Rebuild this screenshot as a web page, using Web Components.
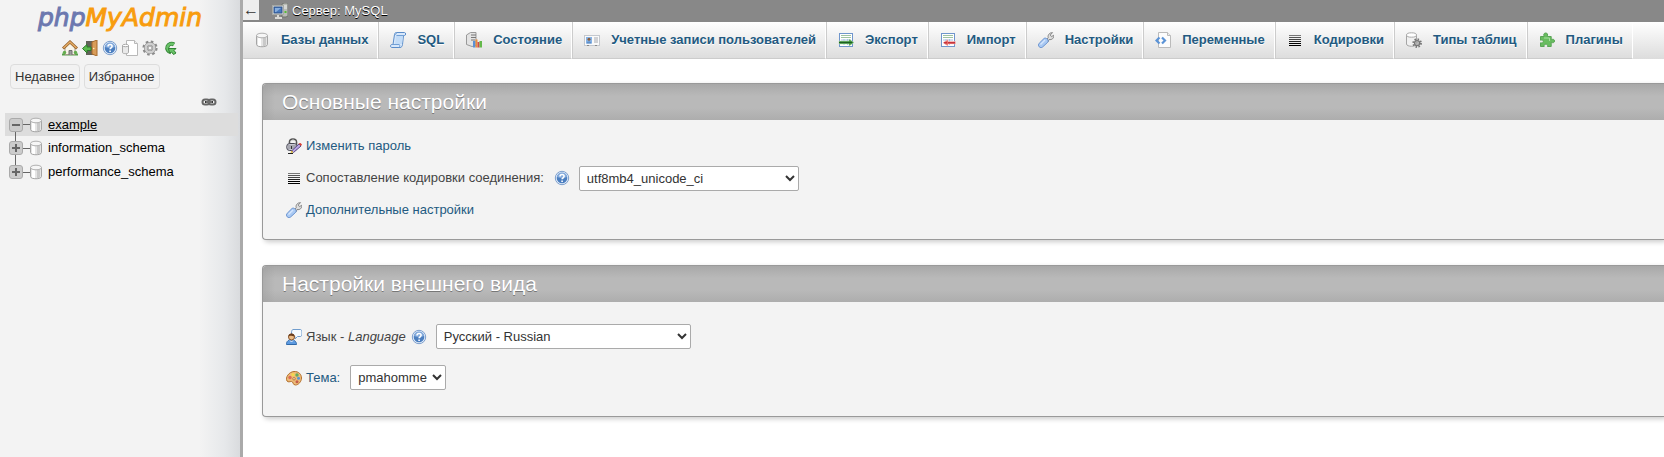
<!DOCTYPE html>
<html lang="ru">
<head>
<meta charset="utf-8">
<title>phpMyAdmin</title>
<style>
    body {
        margin: 0;
        display: flex;
        min-height: 100vh;
        overflow-x: hidden;
        background: #fff;
        color: #444;
        font: 13px/16px "Liberation Sans", Arial, sans-serif;
    }
    main {
        flex: 1;
        min-width: 0;
    }
    .cards {
        display: grid;
        gap: 25px;
        padding: 24px 0 24px 19px;
    }
    .appearance {
        --row-height: 41px;
        --body-padding: 14px 23px 18px;
    }
    .label-wide {
        padding-right: 5px;
    }
    .label-theme {
        padding-right: 10px;
    }
    label a {
        color: #235a81;
        text-decoration: none;
    }
    #collation { width: 220px; }
    #lang { width: 255px; }
    #theme { width: 96px; }
</style>
</head>
<body>

<pma-navigation>
    <pma-tool icon="home" label="Домой"></pma-tool>
    <pma-tool icon="exit" label="Выход"></pma-tool>
    <pma-tool icon="help" label="Документация"></pma-tool>
    <pma-tool icon="sqlhelp" label="Документация MySQL"></pma-tool>
    <pma-tool icon="cog" label="Настройки панели"></pma-tool>
    <pma-tool icon="reload" label="Обновить"></pma-tool>

    <pma-tree-item slot="tree" open first>example</pma-tree-item>
    <pma-tree-item slot="tree">information_schema</pma-tree-item>
    <pma-tree-item slot="tree" last>performance_schema</pma-tree-item>
</pma-navigation>

<main>
    <pma-server-bar>Сервер: MySQL</pma-server-bar>
    <pma-menu>
        <pma-tab icon="db">Базы данных</pma-tab>
        <pma-tab icon="sql">SQL</pma-tab>
        <pma-tab icon="status">Состояние</pma-tab>
        <pma-tab icon="users">Учетные записи пользователей</pma-tab>
        <pma-tab icon="export">Экспорт</pma-tab>
        <pma-tab icon="import">Импорт</pma-tab>
        <pma-tab icon="wrench">Настройки</pma-tab>
        <pma-tab icon="vars">Переменные</pma-tab>
        <pma-tab icon="lines">Кодировки</pma-tab>
        <pma-tab icon="engine">Типы таблиц</pma-tab>
        <pma-tab icon="plugin">Плагины</pma-tab>
    </pma-menu>

    <div class="cards">
        <pma-card heading="Основные настройки">
            <pma-row icon="password"><a href="#password">Изменить пароль</a></pma-row>
            <pma-row icon="lines">
                <label class="label-wide" for="collation">Сопоставление кодировки соединения:</label>
                <pma-help></pma-help>
                <select id="collation"><option>utf8mb4_unicode_ci</option></select>
            </pma-row>
            <pma-row icon="wrench"><a href="#settings">Дополнительные настройки</a></pma-row>
        </pma-card>

        <pma-card class="appearance" heading="Настройки внешнего вида">
            <pma-row icon="lang">
                <label for="lang">Язык - <i>Language</i></label>
                <pma-help></pma-help>
                <select id="lang"><option>Русский - Russian</option></select>
            </pma-row>
            <pma-row icon="theme">
                <label class="label-theme" for="theme"><a href="#themes">Тема:</a></label>
                <select id="theme"><option>pmahomme</option></select>
            </pma-row>
        </pma-card>
    </div>
</main>

<script>
const cylinder = `
    <path d="M2.5 3.5v9c0 3 11 3 11 0v-9z" fill="#e4e4e4" stroke="#a5a5a5"/>
    <path d="M4 5.5v8l3 .8v-8z" fill="#fff"/>
    <path d="M9 6v8.500l3-1v-8.500z" fill="#c9c9c9"/>
    <ellipse cx="8" cy="3.500" rx="5.500" ry="2.300" fill="#f6f6f6" stroke="#b0b0b0"/>`

const gear = `
    <circle cx="8" cy="8" r="6.300" fill="none" stroke="#8b8b8b" stroke-width="2.600" stroke-dasharray="2.500 2.450"/>
    <circle cx="8" cy="8" r="4.300" fill="none" stroke="#8b8b8b" stroke-width="3.600"/>
    <circle cx="8" cy="8" r="4.300" fill="none" stroke="#cfcfcf" stroke-width="2.400"/>
    <circle cx="8" cy="8" r="2" fill="#f5f5f5" stroke="#999"/>`

const sheet = `
    <rect x="1.500" y="1.500" width="13" height="13" fill="#fff" stroke="#6f96cc"/>
    <path d="M3 3.500h10M3 5.500h10" stroke="#9fc3a0"/>
    <path d="M3 8h10M3 10.500h10M6 7v6M9.500 7v6" stroke="#a9c2e3"/>`

const icons = {
    db: cylinder,
    home: `
        <path d="M0 14.500h16" stroke="#57a04a" stroke-width="2"/>
        <path d="M3 8v6.500h10V8L8 3z" fill="#f8f5ea" stroke="#a79c87"/>
        <path d="M7 15v-4.500h3V15" fill="#9b9b9b" stroke="#6f6f6f"/>
        <path d="M1 8.500L8 2l7 6.500" fill="none" stroke="#93602c" stroke-width="3"/>
        <path d="M1.500 8L8 2l6.500 6" fill="none" stroke="#e6ad65" stroke-width="1.500"/>
        <circle cx="2.500" cy="12.500" r="1.700" fill="#62ad4d"/><circle cx="13.500" cy="12.500" r="1.700" fill="#62ad4d"/>`,
    exit: `
        <path d="M4 1h8v14H4z" fill="#62625a"/>
        <path d="M10 2l5-2v16l-5-2z" fill="#d99c58" stroke="#a66b2e"/>
        <circle cx="11.700" cy="8.500" r=".8" fill="#fff0c0"/>
        <path d="M.5 8.500L5 4.500v2.500h4v3.500H5V13z" fill="#5cbb4f" stroke="#2c7a2b"/>`,
    help: `
        <circle cx="8" cy="8" r="6.700" fill="#e3edf9" stroke="#7d9fcd"/>
        <circle cx="8" cy="8" r="5.300" fill="#4c7fc0"/>
        <path d="M3 7a5 4.500 0 0 1 10 0c-3 1.500-7 1.500-10 0z" fill="#84abdc"/>
        <path d="M6 6.500C6 3.800 10.200 3.900 10.100 6.300 10 7.800 8.100 7.800 8.100 9.300M8.100 10.600v1.500" fill="none" stroke="#fff" stroke-width="1.600"/>`,
    sqlhelp: `
        <path d="M4.500.5h8l3 3v12h-11z" fill="#fff" stroke="#b8b8b8"/>
        <path d="M12.500.5v3h3" fill="#eee" stroke="#b8b8b8"/>
        <path d="M.5 5.500v7c0 1.500 6 1.500 6 0v-7z" fill="#e9e9e9" stroke="#a8a8a8"/>
        <ellipse cx="3.500" cy="5.500" rx="3" ry="1.200" fill="#fff" stroke="#a8a8a8"/>`,
    cog: gear,
    reload: `
        <path d="M12 4.500A4.300 4.300 0 1 0 9 12.300" fill="none" stroke="#328334" stroke-width="4"/>
        <path d="M12 4.500A4.300 4.300 0 1 0 9 12.300" fill="none" stroke="#69c268" stroke-width="2.400"/>
        <path d="M6.500 8.500h7.500L12 10.500l2 2.500-2.500 1.500-2-2.500-2 1z" fill="#69c268" stroke="#328334"/>`,
    server: `
        <path d="M10 1l2-1h4v13l-2 1h-4z" fill="#b9bcb6" stroke="#70736e"/>
        <path d="M11 3h4M11 5h4" stroke="#f0f0f0"/><path d="M13.500 8v2" stroke="#55bd36" stroke-width="2"/>
        <rect x=".5" y="2.500" width="11" height="9" fill="#e7e7e2" stroke="#a8aaa5"/>
        <rect x="2" y="4" width="8" height="6" fill="#4779bd" stroke="#2e5389"/>
        <path d="M3 5h6l-5 4H3z" fill="#87aede"/>
        <path d="M6 12v2M3 15h7" stroke="#d9d9d5" stroke-width="2"/>`,
    sql: `
        <path d="M4.500 2.500c0-1 .8-2 2-2h8c1.500 0 1.500 3 0 3h-1l-1 9c0 1.500-1 3-2.500 3H2c-2 0-2-3 0-3h1z" fill="#d8e8fb" stroke="#5a8cc9"/>
        <path d="M6 3h7l-1 9H5z" fill="#c3dcf7"/>
        <path d="M4.500 2.500c1.500 0 2-.5 2-2M13.500 3.500h-7M2 12.500h7c1 0 1 1.500 0 3" fill="none" stroke="#719fd5"/>`,
    status: `
        <path d="M.5 3l4-2.500h5.500v13l-4 1-5.500-2z" fill="#e3e3e3" stroke="#999"/>
        <path d="M5 3h5M5 5.500h5M5 8h4" stroke="#777"/>
        <path d="M7 9h2.500v6.500H7z" fill="#5b91d5"/><path d="M9.500 7.500h2v8h-2z" fill="#eb8d3c"/>
        <path d="M11.500 10h2v5.500h-2z" fill="#cf4a4a"/><path d="M13.500 9h2.500v6.500h-2.500z" fill="#64b94b"/>`,
    users: `
        <rect x=".5" y="3.500" width="15" height="10" fill="#fafafa" stroke="#c4c8ce"/>
        <rect x="2" y="5" width="6" height="6.500" fill="#86b3e6"/>
        <circle cx="5" cy="7.200" r="1.500" fill="#8b5e3d"/><path d="M2.500 11.500c.5-3 4.500-3 5 0z" fill="#5f8fca"/>
        <path d="M10 6h4M10 8h4M10 10h4" stroke="#a4a8b0"/><path d="M3 13.500h2M11 13.500h2" stroke="#888"/>`,
    export: sheet + `
        <path d="M1 9h10V7l5 3.500-5 3.500v-2H1z" fill="#3f933d" stroke="#b9dbb8" stroke-width=".5"/>
        <path d="M1 10.500h13" stroke="#1b5f22"/>`,
    import: sheet + `
        <path d="M15.500 9.500H8v-2l-5 3.300L8 14v-2h7.500z" fill="#e76763" stroke="#f9c5c5" stroke-width=".5"/>
        <path d="M4 10.800h3M8 10.800h7" stroke="#b71e2d"/>`,
    wrench: `
        <path d="M8 8.500l2.200-2.800C9.500 3 11.500.6 14.500.6L12.300 3l1.200 1.700 2.200-1.500c.5 3-2 5-4.700 4.300L10 10z" fill="#dedede" stroke="#858585"/>
        <path d="M1.200 14.800C0 13.500.3 12.300 1.200 11.300L6 6.500c1.900-1.500 5.300 1.700 3.800 3.700L4.700 14.900c-1.100 1-2.500.9-3.500-.1z" fill="#a9c9f3" stroke="#6b94d0"/>
        <path d="M2.500 12.500L7 8" stroke="#d5e6fd" stroke-width="1.500"/>`,
    vars: `
        <path d="M3.500.5h9l3 3v12h-12z" fill="#fcfcfc" stroke="#bbb"/>
        <path d="M12.500.5v3h3" fill="#eee" stroke="#bbb"/>
        <path d="M4.500 5.500L1.500 8.500l3 3M7 5.500l3 3-3 3" fill="none" stroke="#5b93d6" stroke-width="2.200"/>`,
    lines: `
        <path d="M2 3.500h12" stroke="#777"/><path d="M2 5.500h12" stroke="#555"/><path d="M2 7.500h12" stroke="#444"/>
        <path d="M2 9.500h12" stroke="#222"/><path d="M2 11.500h12M2 13.500h12" stroke="#000"/>`,
    engine: `
        <path d="M.5 3v9c0 3 10 3 10 0V3z" fill="#f0f0f0" stroke="#a5a5a5"/>
        <ellipse cx="5.500" cy="3" rx="5" ry="2.200" fill="#fff" stroke="#aaa"/>
        <g transform="translate(6 6) scale(.64)">
            <circle cx="8" cy="8" r="6" fill="none" stroke="#777" stroke-width="3" stroke-dasharray="2.350"/>
            <circle cx="8" cy="8" r="4" fill="#ccc" stroke="#777" stroke-width="2"/>
            <circle cx="8" cy="8" r="1.500" fill="#fff" stroke="#777"/>
        </g>`,
    plugin: `
        <path d="M1.500 4.500h3.700C4.300 2.500 4.900 1 6.700 1s2.400 1.500 1.500 3.500h4v3.200c1.800-.8 3.300-.4 3.300 1.300s-1.500 2.100-3.300 1.300v4.200H8.500c.5-1.700-.3-2.300-1.600-2.300s-2.200.6-1.700 2.300H1.500v-3.700c2 .5 2.800-.2 2.800-1.300s-.8-1.800-2.800-1.300z" fill="#69bd60" stroke="#5aa556"/>
        <path d="M5 6h5.500v3" fill="none" stroke="#a7dfa0"/>`,
    password: `
        <path d="M3.500 7V4c0-4 7-4 7 0v3" fill="none" stroke="#555" stroke-width="1.600"/>
        <path d="M4.500 6V4c0-2.500 5-2.500 5 0v2" fill="none" stroke="#ccc"/>
        <rect x=".7" y="5.500" width="10.500" height="7" rx="3" fill="#c9c9d2" stroke="#474753"/>
        <path d="M1.500 8h9M1.500 10h9" stroke="#85858f"/><path d="M5.500 8v3" stroke="#333"/>
        <path d="M5.500 13l7.500-7 2 2-7.500 6.500z" fill="#b9a5e5" stroke="#5b4c88"/>
        <path d="M12.500 5.500l2-.5 1.500 1.500-1 1.500z" fill="#dd4032"/>
        <path d="M5.500 12.500l-1 2.500 3-.7z" fill="#e2bc31"/><path d="M2 15.500h5" stroke="#222"/>`,
    lang: `
        <path d="M7 .5h7.500c2 0 2 7 0 7h-3L9 10V7.500H7c-2 0-2-7 0-7z" fill="#f6fbff" stroke="#719dcd"/>
        <path d="M.5 15.500c-.5-6.500 10-6.500 10 0z" fill="#5e9be1" stroke="#2e69aa"/>
        <circle cx="5.500" cy="8" r="3" fill="#edbd86" stroke="#8a552c"/>
        <path d="M2.500 7.500C2 3.500 9 3.500 8.500 7.500 6.500 7.500 4 6 2.500 7.500z" fill="#6b3f1e"/>
        <path d="M4 11.500l1.500 1.500L7 11.500" fill="none" stroke="#e8f3ff"/>`,
    theme: `
        <path d="M8 1.500c4.800-.3 7.500 3 7.500 6.500s-3 7-6 7-2-3.500-4-3.500-3 1-4.500-.5C-1 7.500 3 1.800 8 1.500z" fill="#edba78" stroke="#b3702c"/>
        <circle cx="4" cy="7.500" r="1.700" fill="#dd6a55"/><circle cx="7" cy="4.700" r="1.600" fill="#f4d84b"/>
        <circle cx="11" cy="5" r="1.700" fill="#63ac5c"/><circle cx="12.500" cy="8.300" r="1.500" fill="#5a94d2"/>
        <circle cx="11" cy="11.700" r="1.500" fill="#c55c48"/><circle cx="8" cy="8.800" r="1.200" fill="#fff" stroke="#b3702c"/>`,
    link: `
        <rect x="1.500" y="5.500" width="7" height="5" rx="2.500" fill="none" stroke="#666" stroke-width="2"/>
        <rect x="7.500" y="5.500" width="7" height="5" rx="2.500" fill="none" stroke="#666" stroke-width="2"/>
        <path d="M4 8h8" stroke="#333" stroke-width="2"/><path d="M5 8h6" stroke="#ddd" stroke-width=".7"/>`
}

class PmaElement extends HTMLElement {
    constructor() {
        super()
        this.attachShadow({ mode: "open" })
    }

    connectedCallback() {
        const template = document.createElement("template")
        template.innerHTML = `<style>${this.getStyles()}</style>${this.getTemplate()}`
        this.shadowRoot.replaceChildren(template.content.cloneNode(true))
    }

    icon(name = this.getAttribute("icon")) {
        return `<pma-icon name="${name}"></pma-icon>`
    }
}

class PmaIcon extends PmaElement {
    getTemplate() {
        return `<svg viewBox="0 0 16 16" width="16" height="16" aria-hidden="true">${icons[this.getAttribute("name")]}</svg>`
    }

    getStyles() {
        return `
            :host { display: block; flex: none; width: 16px; height: 16px; }
            svg { display: block; }
        `
    }
}

class PmaTool extends PmaElement {
    getTemplate() {
        return `<a href="#${this.getAttribute("icon")}" aria-label="${this.getAttribute("label")}">${this.icon()}</a>`
    }

    getStyles() {
        return `:host { display: block; }`
    }
}

class PmaHelp extends PmaElement {
    getTemplate() {
        return `<a href="#help" aria-label="Документация">${this.icon("help")}</a>`
    }

    getStyles() {
        return `:host { display: block; margin: 0 9px 0 5px; }`
    }
}

class PmaNavigation extends PmaElement {
    getTemplate() {
        return `
            <a class="logo" href="#index"><span>php</span>MyAdmin</a>
            <div class="tools"><slot></slot></div>
            <div class="recent">
                <button type="button">Недавнее</button>
                <button type="button">Избранное</button>
            </div>
            <div class="sync">${this.icon("link")}</div>
            <nav><slot name="tree"></slot></nav>
        `
    }

    getStyles() {
        return `
            :host {
                display: block;
                box-sizing: border-box;
                flex: none;
                width: 243px;
                border-right: 3px solid #aaa;
                background: linear-gradient(to right, #f3f3f3 200px, #e6e8ea 225px, #d9dbde 240px);
            }
            .logo {
                display: block;
                height: 40px;
                color: #f89c0e;
                font: italic 25px/35px "DejaVu Sans", sans-serif;
                -webkit-text-stroke: 1px;
                text-align: center;
                text-decoration: none;
            }
            .logo span { color: #6c78af; }
            .tools {
                display: flex;
                justify-content: center;
                gap: 4px;
            }
            .recent {
                display: flex;
                gap: 4px;
                padding: 8px 10px;
            }
            button {
                box-sizing: border-box;
                height: 25px;
                padding: 0 4px;
                border: 1px solid #ddd;
                border-radius: 4px;
                background: #f2f2f2;
                color: #333;
                font: inherit;
            }
            .sync {
                display: flex;
                justify-content: flex-end;
                height: 15px;
                padding-right: 23px;
                margin-top: -3px;
            }
            nav {
                display: block;
                padding: 4px 2px 0 5px;
            }
        `
    }
}

class PmaTreeItem extends PmaElement {
    getTemplate() {
        const open = this.hasAttribute("open")
        return `
            <button type="button" aria-label="${open ? "Свернуть" : "Развернуть"}">
                <svg viewBox="0 0 14 14" width="14" height="14">
                    <rect x=".5" y=".5" width="13" height="13" rx="2.500" fill="#ccc" stroke="#aaa"/>
                    <path d="M3 7h8${open ? "" : "M7 3v8"}" stroke="#666" stroke-width="2"/>
                </svg>
            </button>
            <i></i>
            ${this.icon("db")}
            <a href="#db"><slot></slot></a>
        `
    }

    getStyles() {
        return `
            :host {
                display: flex;
                align-items: center;
                height: 24px;
                padding-left: 4px;
                /* connector between the toggles */
                background: linear-gradient(#666, #666) 10px 0 / 1px 100% no-repeat;
            }
            :host([first]) {
                height: 23px;
                background: linear-gradient(#666, #666) 10px 100% / 1px 50% no-repeat #ddd;
            }
            :host([last]) { background-size: 1px 50%; }
            button {
                display: flex;
                padding: 0;
                border: 0;
                background: none;
            }
            i {
                width: 7px;
                height: 1px;
                margin-right: -2px;
                background: #666;
            }
            a {
                padding-left: 4px;
                color: #000;
                text-decoration: none;
            }
            :host([open]) a { text-decoration: underline; }
        `
    }
}

class PmaServerBar extends PmaElement {
    getTemplate() {
        return `
            <button type="button" aria-label="Скрыть панель">←</button>
            ${this.icon("server")}
            <a href="#server"><slot></slot></a>
        `
    }

    getStyles() {
        return `
            :host {
                display: flex;
                align-items: center;
                height: 22px;
                background: #888;
            }
            button {
                align-self: flex-start;
                width: 16px;
                height: 20px;
                margin-right: 13px;
                padding: 0;
                border: 0;
                background: #eee;
                color: #333;
                font: 16px/20px "Liberation Sans", Arial, sans-serif;
            }
            a {
                padding-left: 4px;
                color: #fff;
                text-decoration: none;
                text-shadow: 0 1px 0 #000;
            }
        `
    }
}

class PmaMenu extends PmaElement {
    getTemplate() {
        return `<slot></slot>`
    }

    getStyles() {
        return `
            :host {
                display: flex;
                height: 37px;
                background: linear-gradient(#fff, #dcdcdc);
            }
        `
    }
}

class PmaTab extends PmaElement {
    getTemplate() {
        return `<a href="#tab">${this.icon()}<slot></slot></a>`
    }

    getStyles() {
        return `
            :host { display: block; flex: none; }
            a {
                box-sizing: border-box;
                display: flex;
                align-items: center;
                gap: 11px;
                height: 37px;
                padding: 0 9px 0 11px;
                border: 1px solid #ccc;
                border-top: 0;
                border-right-color: #fff;
                color: #235a81;
                font-weight: bold;
                text-decoration: none;
                text-shadow: 0 1px 0 #fff;
            }
            :host(:first-child) a {
                padding-left: 10px;
                border-left-color: transparent;
            }
        `
    }
}

class PmaCard extends PmaElement {
    getTemplate() {
        return `
            <h2>${this.getAttribute("heading")}</h2>
            <div><slot></slot></div>
        `
    }

    getStyles() {
        return `
            :host {
                display: block;
                border: 1px solid #999;
                border-right: 0;
                border-radius: 4px 0 0 4px;
                background: #f3f3f3;
                box-shadow: 2px 2px 5px #ccc;
            }
            h2 {
                margin: 0;
                padding: 0 19px;
                border-radius: 3px 0 0 0;
                background:
                    linear-gradient(to right, #9996, #9990 12px),
                    linear-gradient(#a8a8a8, #b9b9b9 12px, #b9b9b9 24px, #adadad);
                color: #fff;
                font-size: 21px;
                font-weight: normal;
                line-height: 36px;
                text-shadow: 0 1px 0 #777;
            }
            div { padding: var(--body-padding, 10px 23px 13px); }
        `
    }
}

class PmaRow extends PmaElement {
    getTemplate() {
        return `${this.icon()}<slot></slot>`
    }

    getStyles() {
        return `
            :host {
                display: flex;
                align-items: center;
                height: var(--row-height, 32px);
            }
            pma-icon { margin-right: 4px; }
            ::slotted(a) {
                color: #235a81;
                text-decoration: none;
            }
            ::slotted(select) {
                box-sizing: border-box;
                height: 25px;
                padding: 0 0 0 3px;
                border: 1px solid #aaa;
                border-radius: 2px;
                background: #fff;
                color: #333;
                font: inherit;
            }
        `
    }
}

customElements.define("pma-icon", PmaIcon)
customElements.define("pma-tool", PmaTool)
customElements.define("pma-help", PmaHelp)
customElements.define("pma-navigation", PmaNavigation)
customElements.define("pma-tree-item", PmaTreeItem)
customElements.define("pma-server-bar", PmaServerBar)
customElements.define("pma-menu", PmaMenu)
customElements.define("pma-tab", PmaTab)
customElements.define("pma-card", PmaCard)
customElements.define("pma-row", PmaRow)
</script>
</body>
</html>
